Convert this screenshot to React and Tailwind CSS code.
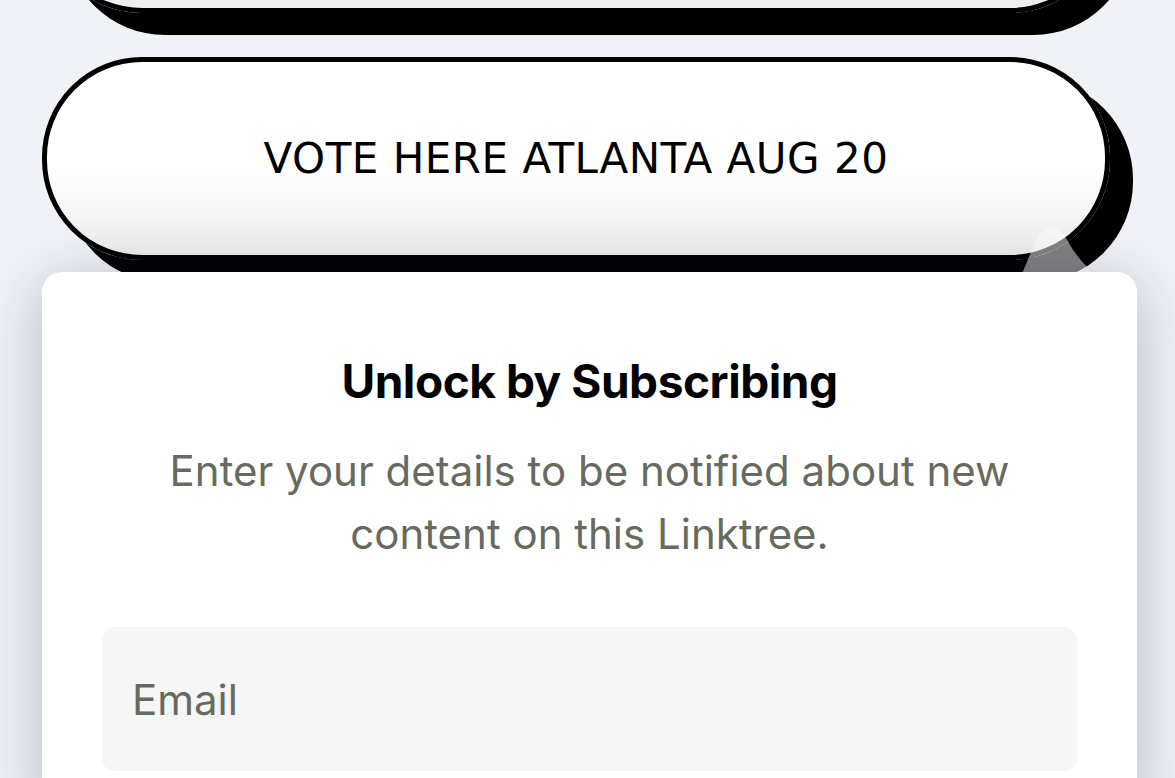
const LinkButton = ({ label, className = '' }) => (
  <div
    className={`relative w-[1068px] h-[203px] shrink-0 rounded-[100px] border-[5px] border-black bg-gradient-to-b from-white from-55% to-[#ededed] shadow-[23px_22px_0_0_#000] flex items-center justify-center ${className}`}
  >
    {label && (
      <span className="font-['DejaVu_Sans',sans-serif] text-[42px] text-black tracking-[0.012em]">
        {label}
      </span>
    )}
  </div>
);

export default function App() {
  return (
    <div className="w-[1175px] h-[778px] overflow-hidden bg-[#eff2f7] pl-[42px] pr-[38px] flex flex-col">
      <LinkButton className="mt-[-190px]" />
      <div className="relative mt-[44px]">
        <LinkButton label="VOTE HERE ATLANTA AUG 20" />
        {/* washed-out bump over the button corner */}
        <svg
          className="absolute left-[973px] top-[168px]"
          width="85"
          height="50"
          viewBox="0 0 85 50"
        >
          <path
            d="M6 50 C14 36 20 8 33 3 C41 0 49 8 55 20 C62 32 70 40 80 50 Z"
            fill="rgba(255,255,255,0.5)"
          />
        </svg>
      </div>

      <div className="relative z-10 mt-[12px] w-[1095px] shrink-0 rounded-[20px] bg-white shadow-[0_10px_60px_rgba(30,40,60,0.28)] pt-[82px] px-[60px] pb-[40px] flex flex-col items-center font-['Inter',sans-serif]">
        <h2 className="text-[46px] leading-[54px] font-bold text-black tracking-[-0.01em]">
          Unlock by Subscribing
        </h2>
        <p className="mt-[31px] text-[42px] leading-[63px] text-[#676b5f] text-center w-[920px]">
          Enter your details to be notified about new content on this Linktree.
        </p>
        <div className="mt-[62px] w-full h-[144px] rounded-[13px] bg-[#f6f6f6] flex items-center px-[30px]">
          <span className="text-[42px] text-[#676b5f]">Email</span>
        </div>
      </div>
    </div>
  );
}
